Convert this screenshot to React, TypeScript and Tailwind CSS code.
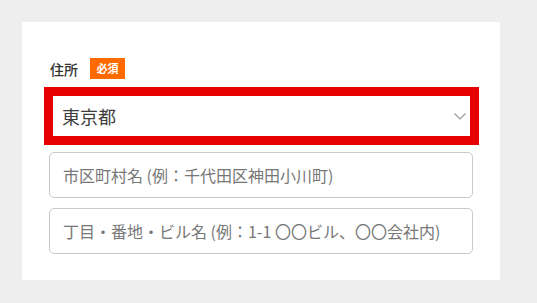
const font = { fontFamily: '"Noto Sans CJK JP", "Noto Sans", sans-serif' };

function AddressField({ placeholder }: { placeholder: string }) {
  return (
    <div className="w-[424px] h-[46px] ml-[5px] rounded-[5px] border border-[#c9c9c9] bg-white flex items-center pl-[13px]">
      <span className="text-[16px] text-[#777777] whitespace-nowrap">{placeholder}</span>
    </div>
  );
}

export default function App() {
  return (
    <div className="w-[537px] h-[303px] bg-[#eeeeee] pt-[22px] pl-[22px]" style={font}>
      <div className="w-[478px] h-[258px] bg-white pt-[36px] pl-[22px] flex flex-col">
        {/* label */}
        <div className="flex items-center h-[21px] pl-[6px] gap-[12px]">
          <span className="text-[14px] font-medium text-[#333333] leading-none">住所</span>
          <span className="h-[21px] w-[35px] bg-[#ff6a00] text-white text-[11px] font-bold flex items-center justify-center leading-none">
            必須
          </span>
        </div>

        {/* highlighted prefecture select */}
        <div className="mt-[8px] w-[435px] h-[58px] border-[9px] border-[#e60000] bg-white flex items-center justify-between pl-[9px] pr-[4px]">
          <span className="text-[18px] text-[#3c3c3c] leading-none">東京都</span>
          <svg width="12" height="7" viewBox="0 0 12 7" fill="none">
            <path d="M0.5 0.5 L6 6 L11.5 0.5" stroke="#9a9a9a" strokeWidth="1.2" />
          </svg>
        </div>

        <div className="mt-[7px]">
          <AddressField placeholder="市区町村名 (例：千代田区神田小川町)" />
        </div>
        <div className="mt-[10px]">
          <AddressField placeholder="丁目・番地・ビル名 (例：1-1 〇〇ビル、〇〇会社内)" />
        </div>
      </div>
    </div>
  );
}
